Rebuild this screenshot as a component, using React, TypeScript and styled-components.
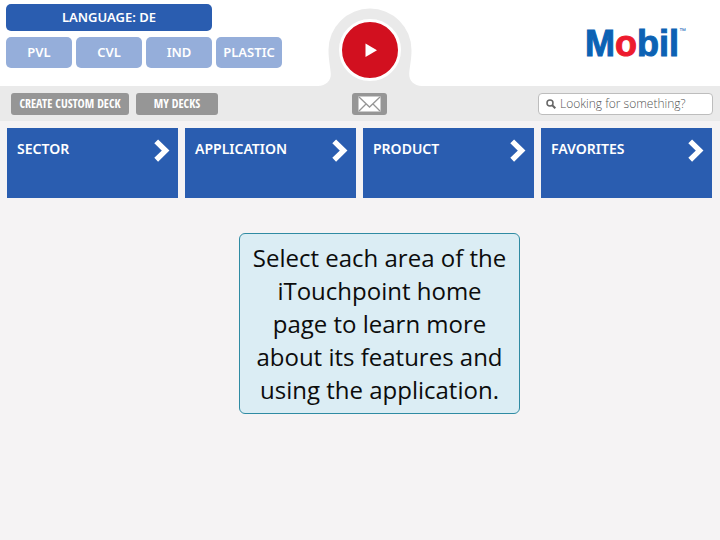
import React from "react";
import styled, { createGlobalStyle } from "styled-components";

const GlobalStyle = createGlobalStyle`
  *, *::before, *::after { box-sizing: border-box; }
  body {
    margin: 0;
    background: #f5f3f4;
    font-family: "Noto Sans", "Open Sans", sans-serif;
  }
  button, input { font-family: inherit; }
`;

const Page = styled.div`
  min-height: 100vh;
  display: flex;
  flex-direction: column;
`;

const Header = styled.header`
  display: grid;
  grid-template-columns: minmax(0, 1fr) 104px 298px;
  height: 86px;
  background: #fff;
`;

const Segments = styled.nav`
  display: grid;
  grid-template-columns: repeat(4, 66px);
  grid-template-rows: 27px 31px;
  gap: 6px 4px;
  padding: 4px 0 0 6px;
`;

const SegmentButton = styled.button<{ $primary?: boolean }>`
  grid-column: ${(p) => (p.$primary ? "span 3" : "auto")};
  padding: 0 0 2px;
  border: 0;
  border-radius: 5px;
  background: ${(p) => (p.$primary ? "#2a5db0" : "#95aeda")};
  color: #fff;
  font-size: 13px;
  font-weight: 600;
  line-height: 16px;
  white-space: nowrap;
  cursor: pointer;

  &:first-child + & {
    grid-column-start: 1;
  }
`;

const Hub = styled.div`
  display: grid;
  align-items: end;
  justify-items: center;

  > * {
    grid-area: 1 / 1;
  }
`;

const HubShape = styled.svg`
  display: block;
  width: 104px;
  height: 78px;
`;

const PlayButton = styled.button`
  display: grid;
  place-items: center;
  width: 62px;
  height: 62px;
  margin-bottom: 5px;
  padding: 0;
  border: 3px solid #fff;
  border-radius: 50%;
  background: #d2101f;
  cursor: pointer;
`;

const Brand = styled.a`
  display: flex;
  align-items: flex-start;
  justify-content: flex-end;
  padding: 21px 34px 0 0;
  color: #0c62b4;
  font-family: "Liberation Sans", sans-serif;
  font-size: 36px;
  font-weight: 700;
  line-height: 46px;
  text-decoration: none;

  span {
    -webkit-text-stroke: 1px currentColor;
  }

  em {
    color: #ed1b2e;
    font-style: normal;
  }

  small {
    padding-top: 6px;
    font-size: 7px;
    font-weight: 400;
    line-height: 8px;
  }
`;

const ActionBar = styled.div`
  display: grid;
  grid-template-columns: minmax(0, 1fr) 35px 333px;
  align-items: center;
  height: 35px;
  background: #eaeaea;
`;

const DeckActions = styled.div`
  display: flex;
  gap: 7px;
  padding-left: 11px;
`;

const GreyButton = styled.button<{ $width: number }>`
  display: grid;
  place-items: center;
  width: ${(p) => p.$width}px;
  height: 22px;
  padding: 0;
  border: 0;
  border-radius: 3px;
  background: #969696;
  color: #fff;
  font-family: "Open Sans Condensed", "Liberation Sans Narrow", sans-serif;
  font-size: 12px;
  font-weight: 700;
  line-height: 16px;
  white-space: nowrap;
  cursor: pointer;
`;

const SearchBox = styled.label`
  display: flex;
  align-items: center;
  justify-self: end;
  gap: 4px;
  width: 175px;
  height: 22px;
  margin-right: 7px;
  padding: 0 7px;
  border: 1px solid #bdbdbd;
  border-radius: 4px;
  background: #fff;

  svg {
    flex: none;
  }
`;

const SearchInput = styled.input`
  flex: 1;
  min-width: 0;
  padding: 0;
  border: 0;
  outline: 0;
  background: transparent;
  color: #555;
  font-family: "Open Sans", sans-serif;
  font-size: 12px;
  font-weight: 300;
  line-height: 18px;

  &::placeholder {
    color: #555;
    opacity: 1;
  }
`;

const Tiles = styled.div`
  display: grid;
  grid-template-columns: repeat(4, minmax(0, 1fr));
  gap: 7px;
  padding: 7px 8px 0 7px;
`;

const Tile = styled.button`
  display: flex;
  align-items: flex-start;
  justify-content: space-between;
  height: 70px;
  padding: 11px 8px 0 10px;
  border: 0;
  background: #2a5db0;
  color: #fff;
  font-size: 14px;
  font-weight: 600;
  line-height: 20px;
  cursor: pointer;
`;

const Callout = styled.p`
  align-self: center;
  width: 281px;
  margin: 35px 0 0 39px;
  padding: 7px 12px;
  border: 1px solid #2f8ba3;
  border-radius: 6px;
  background: #dbedf4;
  color: #0c0c0c;
  font-family: "Open Sans", "Noto Sans", sans-serif;
  font-size: 24px;
  line-height: 33px;
  text-align: center;
`;

const Chevron = () => (
  <svg width="16" height="24" viewBox="0 0 16 24" aria-hidden="true">
    <path d="M2.200 2.400 L11.600 11.600 L2.200 20.800" fill="none" stroke="#fff" strokeWidth="5.400" />
  </svg>
);

const segments = ["PVL", "CVL", "IND", "PLASTIC"];
const tiles = ["SECTOR", "APPLICATION", "PRODUCT", "FAVORITES"];

export default function App() {
  return (
    <Page>
      <GlobalStyle />
      <Header>
        <Segments aria-label="Segments">
          <SegmentButton $primary>LANGUAGE: DE</SegmentButton>
          {segments.map((name) => (
            <SegmentButton key={name}>{name}</SegmentButton>
          ))}
        </Segments>
        <Hub>
          <HubShape viewBox="0 0 104 78" aria-hidden="true">
            <path
              d="M0 78 C8 77.500 13 73 12.800 66 C12.600 60 10.500 52 10.500 42 A41.500 41.500 0 0 1 93.500 42 C93.500 52 91.400 60 91.200 66 C91 73 96 77.500 104 78 Z"
              fill="#eaeaea"
            />
          </HubShape>
          <PlayButton aria-label="Play">
            <svg width="16" height="16" viewBox="0 0 16 16" aria-hidden="true">
              <path d="M3.500 1.500 L15 8.300 L3.500 15 Z" fill="#fff" />
            </svg>
          </PlayButton>
        </Hub>
        <Brand href="#">
          <span>
            M<em>o</em>bil
          </span>
          <small>™</small>
        </Brand>
      </Header>
      <ActionBar>
        <DeckActions>
          <GreyButton $width={118}>CREATE CUSTOM DECK</GreyButton>
          <GreyButton $width={82}>MY DECKS</GreyButton>
        </DeckActions>
        <GreyButton $width={35} aria-label="Mail">
          <svg width="23" height="16" viewBox="0 0 23 16" aria-hidden="true">
            <rect x="0.500" y="0.500" width="22" height="15" fill="#fff" />
            <path
              d="M1 1 L11.500 11 L22 1 M1 15 L8 8 M22 15 L15 8"
              fill="none"
              stroke="#969696"
              strokeWidth="1.300"
            />
          </svg>
        </GreyButton>
        <SearchBox>
          <svg width="10" height="10" viewBox="0 0 10 10" aria-hidden="true">
            <circle cx="4" cy="4" r="3" fill="none" stroke="#666" strokeWidth="1.500" />
            <path d="M6 6 L9.300 9.300" stroke="#666" strokeWidth="2" />
          </svg>
          <SearchInput type="text" aria-label="Search" placeholder="Looking for something?" />
        </SearchBox>
      </ActionBar>
      <Tiles>
        {tiles.map((name) => (
          <Tile key={name}>
            <span>{name}</span>
            <Chevron />
          </Tile>
        ))}
      </Tiles>
      <Callout>
        Select each area of the iTouchpoint home page to learn more about its features and using the
        application.
      </Callout>
    </Page>
  );
}
